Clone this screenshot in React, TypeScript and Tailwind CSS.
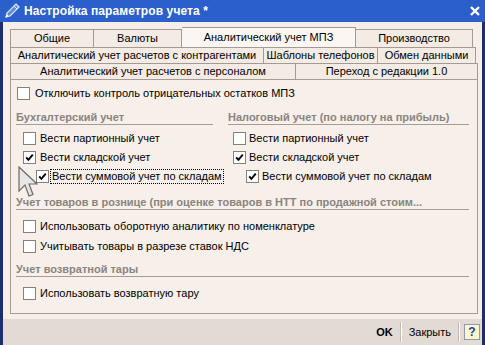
import React from "react";

const Check = ({ checked }: { checked?: boolean }) => (
  <span className="w-[13px] h-[13px] border border-[#85807a] bg-white flex items-center justify-center shrink-0 box-border">
    {checked && (
      <svg width="9" height="9" viewBox="0 0 9 9">
        <path d="M1.2 4.4 L3.4 6.8 L7.8 1.6" stroke="#000" strokeWidth="1.9" fill="none" />
      </svg>
    )}
  </span>
);

const Row = ({
  label,
  checked,
  indent,
  gap = "ml-[4px]",
  focus,
  h = "h-[19px]",
}: {
  label: string;
  checked?: boolean;
  indent: string;
  gap?: string;
  focus?: boolean;
  h?: string;
}) => (
  <div className={`flex items-center ${h} ${indent}`}>
    <Check checked={checked} />
    {focus ? (
      <span className="ml-[1px] px-[1px] leading-[13px] border border-dotted border-black whitespace-nowrap">{label}</span>
    ) : (
      <span className={`${gap} whitespace-nowrap`}>{label}</span>
    )}
  </div>
);

const Header = ({ text, cls = "" }: { text: string; cls?: string }) => (
  <div className={`h-[14px] box-border border-b border-[#a49c95] font-bold text-[#8a847e] leading-[13px] whitespace-nowrap overflow-hidden ${cls}`}>
    {text}
  </div>
);

const Tab = ({ label, w, selected }: { label: string; w: string; selected?: boolean }) => (
  <div
    className={`${w} box-border border-t border-r border-[#a39b93] flex items-center justify-center whitespace-nowrap ${
      selected ? "-mt-[2px] h-[20px] bg-[#fbf6f2]" : "h-full bg-[#f3ebe4]"
    }`}
  >
    {label}
  </div>
);

export default function App() {
  return (
    <div className="w-[485px] h-[345px] flex flex-col overflow-hidden relative font-['Liberation_Sans',Arial,sans-serif] text-[11px] text-black bg-[#1d2e6b]">
      {/* Title bar */}
      <div className="h-[22px] shrink-0 bg-[#2b5fcb] flex items-center text-white">
        <svg width="18" height="18" viewBox="0 0 18 18" className="ml-[3px]">
          <path d="M3 15 L4 11 L13 2 L16 5 L7 14 Z" fill="#5d8be0" stroke="#dfeaff" strokeWidth="1.2" />
          <path d="M11 4 L14 7" stroke="#dfeaff" strokeWidth="1" />
          <path d="M3 15 L5 13" stroke="#ffffff" strokeWidth="1.2" />
        </svg>
        <span className="ml-[3px] font-bold text-[12px] tracking-[0.1px]">Настройка параметров учета *</span>
        <div className="flex-1" />
        <svg width="10" height="10" viewBox="0 0 10 10" className="mr-[5px]">
          <path d="M1 1 L9 9 M9 1 L1 9" stroke="#fff" strokeWidth="2.4" />
        </svg>
      </div>

      {/* Body */}
      <div className="flex-1 flex flex-col ml-[3px] mr-[3px] bg-[#f6eee8]">
        {/* Tabs */}
        <div className="pt-[7px] pl-[7px] flex flex-col">
          <div className="flex h-[18px] items-end">
            <div className="flex h-[18px] border-l border-[#a39b93] items-end">
              <Tab label="Общие" w="w-[83px]" />
              <Tab label="Валюты" w="w-[88px]" />
              <Tab label="Аналитический учет МПЗ" w="w-[174px]" selected />
              <Tab label="Производство" w="w-[117px]" />
            </div>
          </div>
          <div className="flex h-[16px] border-l border-[#a39b93] w-fit">
            <Tab label="Аналитический учет расчетов с контрагентами" w="w-[253px]" />
            <Tab label="Шаблоны телефонов" w="w-[114px]" />
            <Tab label="Обмен данными" w="w-[98px]" />
          </div>
          <div className="flex h-[16px] border-l border-[#a39b93] w-fit">
            <Tab label="Аналитический учет расчетов с персоналом" w="w-[285px]" />
            <Tab label="Переход с редакции 1.0" w="w-[182px]" />
          </div>
        </div>

        {/* Panel */}
        <div className="ml-[7px] w-[468px] h-[235px] box-border border border-[#a49d97] bg-[#f7efe9] pl-[5px] pr-[8px] flex flex-col">
          <div className="mt-[3px]">
            <Row label="Отключить контроль отрицательных остатков МПЗ" indent="ml-[1px]" gap="ml-[5px]" h="h-[20px]" />
          </div>
          <div className="grid grid-cols-[197px_241px] gap-x-[15px] mt-[8px]">
            <div className="flex flex-col">
              <Header text="Бухгалтерский учет" />
              <div className="mt-[4px]">
                <Row label="Вести партионный учет" indent="ml-[7px]" />
                <Row label="Вести складской учет" indent="ml-[7px]" checked />
                <Row label="Вести суммовой учет по складам" indent="ml-[20px]" checked focus />
              </div>
            </div>
            <div className="flex flex-col">
              <Header text="Налоговый учет (по налогу на прибыль)" />
              <div className="mt-[4px]">
                <Row label="Вести партионный учет" indent="ml-[5px]" gap="ml-[3px]" />
                <Row label="Вести складской учет" indent="ml-[5px]" gap="ml-[3px]" checked />
                <Row label="Вести суммовой учет по складам" indent="ml-[18px]" gap="ml-[3px]" checked />
              </div>
            </div>
          </div>
          <div className="mt-[10px]">
            <Header text="Учет товаров в рознице (при оценке товаров в НТТ по продажной стоим..." />
          </div>
          <div className="mt-[6px]">
            <Row label="Использовать оборотную аналитику по номенклатуре" indent="ml-[7px]" h="h-[20px]" />
            <Row label="Учитывать товары в разрезе ставок НДС" indent="ml-[7px]" h="h-[20px]" />
          </div>
          <div className="mt-[7px]">
            <Header text="Учет возвратной тары" />
          </div>
          <div className="mt-[6px]">
            <Row label="Использовать возвратную тару" indent="ml-[7px]" h="h-[20px]" />
          </div>
        </div>

        <div className="h-[5px]" />

        {/* Bottom bar */}
        <div className="flex-1 bg-[#e2dad4] flex items-center justify-end pr-[2px]">
          <span className="font-bold text-[11px]">OK</span>
          <span className="ml-[7px] w-[2px] h-[20px] border-l border-[#c4bbb2] border-r border-r-white box-border" />
          <span className="ml-[7px]">Закрыть</span>
          <span className="ml-[7px] w-[2px] h-[20px] border-l border-[#c4bbb2] border-r border-r-white box-border" />
          <span className="ml-[4px] w-[16px] h-[16px] box-border border border-[#8c9bb5] bg-[#fdf6c8] flex items-center justify-center font-bold text-[#1d3fa8] text-[12px] leading-none">
            ?
          </span>
        </div>
      </div>

      {/* Mouse cursor */}
      <svg width="20" height="32" viewBox="0 0 20 32" className="absolute left-[18px] top-[166px]">
        <path d="M1 1 L1 25 L7 19 L11 30 L15 28.5 L11 18 L19 18 Z" fill="#e4e4e4" fillOpacity="0.85" stroke="#4a4a4a" strokeWidth="1.2" strokeOpacity="0.8" />
      </svg>
    </div>
  );
}
